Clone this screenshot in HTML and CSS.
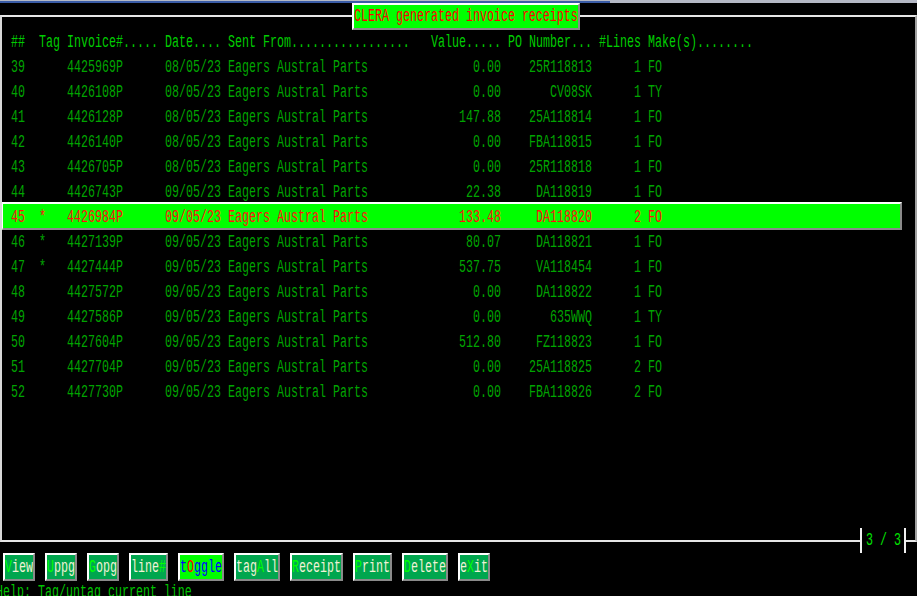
FILE: index.html
```html
<!DOCTYPE html>
<html>
<head>
<meta charset="utf-8">
<link rel="stylesheet" href="styles.css">
</head>
<body>
<div class="screen">
  <div class="topbar"></div>
  <div class="frame">
    <div class="row head"><div class="cells"><span>##</span><span>Tag</span><span>Invoice#.....</span><span>Date....</span><span>Sent From.................</span><span class="r">Value.....</span><span class="r">PO Number...</span><span class="r">#Lines</span><span>Make(s)........</span></div></div>
    <div class="row"><div class="cells"><span>39</span><span></span><span>4425969P</span><span>08/05/23</span><span>Eagers Austral Parts</span><span class="r">0.00</span><span class="r">25R118813</span><span class="r">1</span><span>FO</span></div></div>
    <div class="row"><div class="cells"><span>40</span><span></span><span>4426108P</span><span>08/05/23</span><span>Eagers Austral Parts</span><span class="r">0.00</span><span class="r">CV08SK</span><span class="r">1</span><span>TY</span></div></div>
    <div class="row"><div class="cells"><span>41</span><span></span><span>4426128P</span><span>08/05/23</span><span>Eagers Austral Parts</span><span class="r">147.88</span><span class="r">25A118814</span><span class="r">1</span><span>FO</span></div></div>
    <div class="row"><div class="cells"><span>42</span><span></span><span>4426140P</span><span>08/05/23</span><span>Eagers Austral Parts</span><span class="r">0.00</span><span class="r">FBA118815</span><span class="r">1</span><span>FO</span></div></div>
    <div class="row"><div class="cells"><span>43</span><span></span><span>4426705P</span><span>08/05/23</span><span>Eagers Austral Parts</span><span class="r">0.00</span><span class="r">25R118818</span><span class="r">1</span><span>FO</span></div></div>
    <div class="row"><div class="cells"><span>44</span><span></span><span>4426743P</span><span>09/05/23</span><span>Eagers Austral Parts</span><span class="r">22.38</span><span class="r">DA118819</span><span class="r">1</span><span>FO</span></div></div>
    <div class="row sel"><div class="cells"><span>45</span><span>*</span><span>4426984P</span><span>09/05/23</span><span>Eagers Austral Parts</span><span class="r">133.48</span><span class="r">DA118820</span><span class="r">2</span><span>FO</span></div></div>
    <div class="row"><div class="cells"><span>46</span><span>*</span><span>4427139P</span><span>09/05/23</span><span>Eagers Austral Parts</span><span class="r">80.07</span><span class="r">DA118821</span><span class="r">1</span><span>FO</span></div></div>
    <div class="row"><div class="cells"><span>47</span><span>*</span><span>4427444P</span><span>09/05/23</span><span>Eagers Austral Parts</span><span class="r">537.75</span><span class="r">VA118454</span><span class="r">1</span><span>FO</span></div></div>
    <div class="row"><div class="cells"><span>48</span><span></span><span>4427572P</span><span>09/05/23</span><span>Eagers Austral Parts</span><span class="r">0.00</span><span class="r">DA118822</span><span class="r">1</span><span>FO</span></div></div>
    <div class="row"><div class="cells"><span>49</span><span></span><span>4427586P</span><span>09/05/23</span><span>Eagers Austral Parts</span><span class="r">0.00</span><span class="r">635WWQ</span><span class="r">1</span><span>TY</span></div></div>
    <div class="row"><div class="cells"><span>50</span><span></span><span>4427604P</span><span>09/05/23</span><span>Eagers Austral Parts</span><span class="r">512.80</span><span class="r">FZ118823</span><span class="r">1</span><span>FO</span></div></div>
    <div class="row"><div class="cells"><span>51</span><span></span><span>4427704P</span><span>09/05/23</span><span>Eagers Austral Parts</span><span class="r">0.00</span><span class="r">25A118825</span><span class="r">2</span><span>FO</span></div></div>
    <div class="row"><div class="cells"><span>52</span><span></span><span>4427730P</span><span>09/05/23</span><span>Eagers Austral Parts</span><span class="r">0.00</span><span class="r">FBA118826</span><span class="r">2</span><span>FO</span></div></div>
  </div>
  <div class="title"><span class="txt">CLERA generated invoice receipts</span></div>
  <div class="pager"><span class="txt">3 / 3</span></div>
  <div class="buttons">
    <div class="btn"><span class="txt"><b>V</b>iew</span></div>
    <div class="btn"><span class="txt"><b>U</b>ppg</span></div>
    <div class="btn"><span class="txt"><b>G</b>opg</span></div>
    <div class="btn"><span class="txt">line<b>#</b></span></div>
    <div class="btn on"><span class="txt">t<b>O</b>ggle</span></div>
    <div class="btn"><span class="txt">tag<b>A</b>ll</span></div>
    <div class="btn"><span class="txt"><b>R</b>eceipt</span></div>
    <div class="btn"><span class="txt"><b>P</b>rint</span></div>
    <div class="btn"><span class="txt"><b>D</b>elete</span></div>
    <div class="btn"><span class="txt">e<b>X</b>it</span></div>
  </div>
  <div class="help"><span class="txt">Help: Tag/untag current line</span></div>
</div>
</body>
</html>
```
FILE: styles.css
```css
html, body {
  margin: 0;
  padding: 0;
  background: #000;
}
body {
  width: 917px;
  height: 596px;
  overflow: hidden;
  font-family: "Liberation Mono", monospace;
  font-size: 11.667px;
}
.screen {
  position: relative;
  width: 917px;
  height: 596px;
}
.topbar {
  height: 2px;
  border-top: 1px solid #b4b8c4;
  background: linear-gradient(to right, #3a5ca6 0, #3a5ca6 610px, #b4b8c4 610px);
}
.frame {
  box-sizing: border-box;
  margin-top: 12px;
  width: 917px;
  height: 527px;
  border-top: 2px solid #e6e6e6;
  border-left: 2px solid #d8d8d8;
  border-right: 2px solid #a0a0a0;
  border-bottom: 2px solid #e6e6e6;
  padding-top: 13px;
}
.row {
  height: 25px;
  padding-left: 9px;
  line-height: 25px;
  color: #00a400;
  white-space: pre;
}
.row.head {
  color: #00cc00;
}
.cells {
  display: grid;
  grid-template-columns: 28px 28px 98px 63px 203px 77px 91px 49px 1fr;
  transform: scaleY(1.6);
}
.cells .r {
  text-align: right;
  padding-right: 7px;
}
.row.sel {
  box-sizing: border-box;
  width: 900px;
  height: 28px;
  margin-top: -3px;
  padding-left: 8px;
  padding-top: 2px;
  line-height: 22px;
  background: #00ff00;
  color: #ff1010;
  border-top: 2px solid #ffffff;
  border-left: 1px solid #ffffff;
  border-right: 2px solid #8a8a8a;
  border-bottom: 2px solid #8a8a8a;
}
.row.sel + .row {
  margin-top: 0;
}
.txt {
  display: inline-block;
  transform: scaleY(1.6);
  white-space: pre;
}
.title {
  position: absolute;
  left: 352px;
  top: 3px;
  box-sizing: border-box;
  height: 27px;
  padding-right: 0;
  line-height: 23px;
  background: #00ff00;
  color: #ff0000;
  border-top: 2px solid #ffffff;
  border-left: 2px solid #ffffff;
  border-right: 2px solid #8a8a8a;
  border-bottom: 2px solid #8a8a8a;
}
.pager {
  position: absolute;
  left: 860px;
  top: 528px;
  height: 25px;
  line-height: 25px;
  padding: 0 3px 0 4px;
  background: #000;
  color: #00e000;
  border-left: 2px solid #f0f0f0;
  border-right: 2px solid #f0f0f0;
}
.buttons {
  display: flex;
  gap: 10px;
  margin-top: 11px;
  padding-left: 3px;
}
.btn {
  box-sizing: border-box;
  height: 28px;
  line-height: 24px;
  background: #00a64e;
  color: #f2f2d6;
  border-top: 2px solid #ffffff;
  border-left: 2px solid #ffffff;
  border-right: 2px solid #8a8a8a;
  border-bottom: 2px solid #8a8a8a;
}
.btn b {
  font-weight: normal;
  color: #00ff00;
}
.btn.on {
  background: #00ff00;
  color: #0000ff;
}
.btn.on b {
  color: #ff0000;
}
.help {
  margin-top: -1px;
  margin-left: -4px;
  height: 25px;
  line-height: 25px;
  color: #00c400;
}
```
